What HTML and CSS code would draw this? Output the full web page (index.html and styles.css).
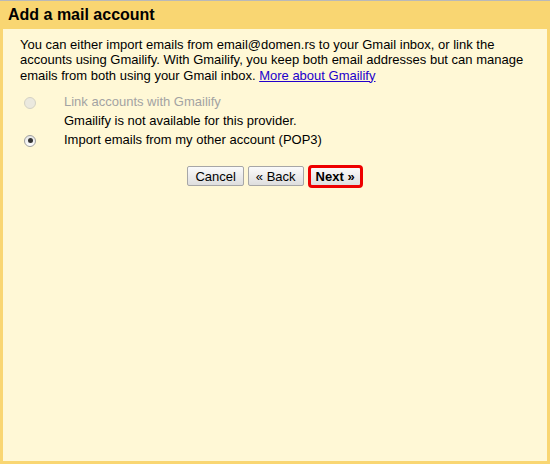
FILE: index.html
```html
<!DOCTYPE html>
<html lang="en">
<head>
  <meta charset="UTF-8" />
  <title>Add a mail account</title>
  <link rel="stylesheet" href="styles.css">
</head>
<body>
  <div class="dialog">
    <div class="dialog-title">Add a mail account</div>
    <div class="dialog-body">
      <p class="intro">You can either import emails from email@domen.rs to your Gmail inbox, or link the accounts using Gmailify. With Gmailify, you keep both email addresses but can manage emails from both using your Gmail inbox. <a href="#">More about Gmailify</a></p>

      <div class="options">
        <div class="option disabled">
          <span class="radio"></span>
          <div class="option-text">
            <div class="option-label">Link accounts with Gmailify</div>
            <div class="option-note">Gmailify is not available for this provider.</div>
          </div>
        </div>
        <div class="option">
          <span class="radio checked"></span>
          <div class="option-text">
            <div class="option-label">Import emails from my other account (POP3)</div>
          </div>
        </div>
      </div>

      <div class="actions">
        <button class="btn">Cancel</button>
        <button class="btn">&laquo; Back</button>
        <button class="btn btn-next">Next &raquo;</button>
      </div>
    </div>
  </div>
</body>
</html>
```

FILE: styles.css
```css
* {
  box-sizing: border-box;
}

html, body {
  margin: 0;
  padding: 0;
  height: 100%;
  font-family: Arial, 'Liberation Sans', sans-serif;
  font-size: 13px;
  color: #000;
  background: #fff;
}

.dialog {
  height: 464px;
  display: flex;
  flex-direction: column;
  border-top: 1px solid #b9b9b9;
  background: #f9d672;
}

.dialog-title {
  height: 28px;
  padding: 0 8px;
  font-size: 16px;
  font-weight: bold;
  line-height: 28px;
}

.dialog-body {
  flex: 1;
  margin: 0 3px 3px;
  padding: 8px 17px;
  background: #fff8d6;
}

.intro {
  margin: 0;
  line-height: 15.3px;
}

.intro a {
  color: #2200cc;
}

.options {
  margin-top: 11px;
  display: flex;
  flex-direction: column;
  gap: 4px;
}

.option {
  display: flex;
  align-items: flex-start;
}

.option-note {
  margin-top: 4px;
}

.disabled .option-label {
  color: #a3a3a3;
}

.radio {
  width: 12px;
  height: 12px;
  margin: 3px 28px 0 4px;
  border-radius: 50%;
  border: 1px solid #a0a0a0;
  background: linear-gradient(to bottom, #e6e6e6, #fdfdfd);
  display: flex;
  align-items: center;
  justify-content: center;
  flex-shrink: 0;
}

.disabled .radio {
  border-color: #d4d2c4;
  background: #ebe9df;
}

.radio.checked::after {
  content: '';
  width: 5px;
  height: 5px;
  border-radius: 50%;
  background: #333;
}

.actions {
  margin-top: 18px;
  display: flex;
  justify-content: center;
  align-items: center;
  gap: 4px;
}

.btn {
  height: 20px;
  padding: 0 7px;
  font-family: inherit;
  font-size: 13px;
  color: #000;
  border: 1px solid #a7a7a7;
  border-radius: 2px;
  background: linear-gradient(to bottom, #fbfbfb, #dedede);
}

.btn-next {
  height: 23px;
  padding: 0 5px;
  font-weight: bold;
  border: 3px solid #ee0000;
  border-radius: 4px;
}
```
